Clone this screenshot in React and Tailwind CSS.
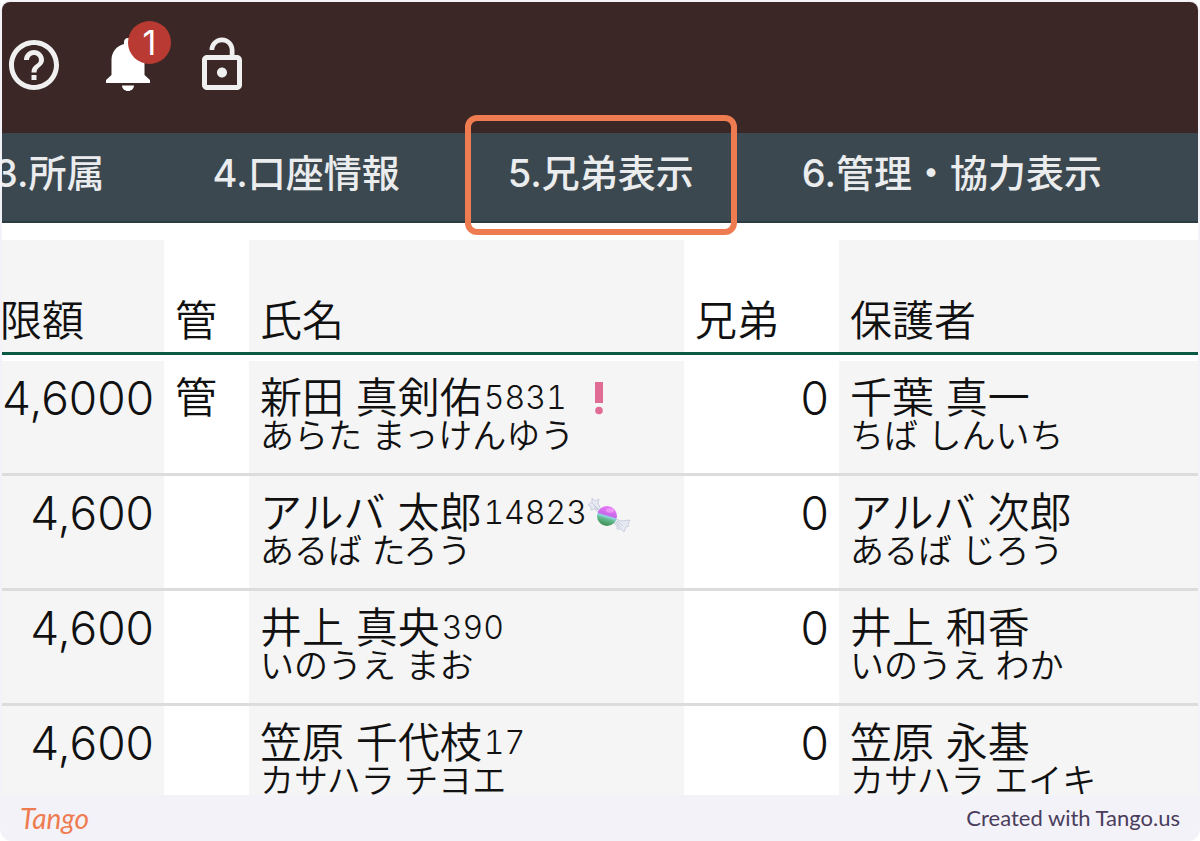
import { MdHelpOutline, MdLockOpen } from 'react-icons/md';

const NAV_ITEMS = ['3.所属', '4.口座情報', '5.兄弟表示', '6.管理・協力表示'];
const ACTIVE_ITEM = '5.兄弟表示';

const ROWS = [
  {
    limit: '4,6000',
    managed: '管',
    name: '新田 真剣佑',
    code: '5831',
    mark: 'alert',
    kana: 'あらた まっけんゆう',
    siblings: 0,
    guardian: '千葉 真一',
    guardianKana: 'ちば しんいち',
  },
  {
    limit: '4,600',
    managed: '',
    name: 'アルバ 太郎',
    code: '14823',
    mark: 'candy',
    kana: 'あるば たろう',
    siblings: 0,
    guardian: 'アルバ 次郎',
    guardianKana: 'あるば じろう',
  },
  {
    limit: '4,600',
    managed: '',
    name: '井上 真央',
    code: '390',
    kana: 'いのうえ まお',
    siblings: 0,
    guardian: '井上 和香',
    guardianKana: 'いのうえ わか',
  },
  {
    limit: '4,600',
    managed: '',
    name: '笠原 千代枝',
    code: '17',
    kana: 'カサハラ チヨエ',
    siblings: 0,
    guardian: '笠原 永基',
    guardianKana: 'カサハラ エイキ',
  },
];

function BellIcon() {
  return (
    <svg viewBox="0 0 60 60" className="size-[60px]" fill="currentColor" aria-hidden="true">
      <path d="M30 3c-2.600 0-4 1.800-4 4v2C18.500 10.800 13.500 17 13.500 25v15L8 45v3h44v-3l-5.500-5V25c0-8-5-14.200-12.500-16V7c0-2.200-1.400-4-4-4Z" />
      <path d="M24 50.500h12c0 3-2.700 5.500-6 5.500s-6-2.500-6-5.500Z" />
    </svg>
  );
}

function AlertMark() {
  return (
    <svg viewBox="0 0 12 34" className="ml-[26px] h-[34px] w-3 shrink-0" fill="#e06c96" role="img" aria-label="注意">
      <rect x="2" y="1" width="8" height="21" />
      <circle cx="6" cy="29.500" r="3.800" />
    </svg>
  );
}

function CandyMark() {
  return (
    <svg viewBox="0 0 44 38" className="h-[38px] w-11 shrink-0" role="img" aria-label="キャンディ">
      <defs>
        <linearGradient id="candy" x1="0.650" y1="0" x2="0.350" y2="1">
          <stop offset="0" stopColor="#ee7cf8" />
          <stop offset="0.450" stopColor="#c866ea" />
          <stop offset="0.520" stopColor="#8fd8e0" />
          <stop offset="0.660" stopColor="#5fb98e" />
          <stop offset="1" stopColor="#3f8a4a" />
        </linearGradient>
      </defs>
      <g fill="#e6e8f2" stroke="#c3c7d8" strokeWidth="0.800" strokeLinejoin="round">
        <path d="M14 16 11 9 12 5 8 7 5 4 5 8 1 11l3 2 0 3 4-1 5 5Z" />
        <path d="m29 25 5 2 9-1-2 4 1 2-3 1-2 5-3-3-4 0 0-3-4-4Z" />
      </g>
      <path d="M5 9l8 8M7 13l6 4M30 27l6 5M29 28l4 6" stroke="#b7bccf" strokeWidth="0.700" />
      <circle cx="20" cy="22" r="10" fill="url(#candy)" />
      <ellipse cx="23" cy="16.500" rx="4" ry="2.200" fill="#fbb9fb" opacity="0.500" />
    </svg>
  );
}

function TopBar() {
  return (
    <header className="flex gap-[34px] bg-[#3b2826] pt-[33px] pb-[38px] pl-0.5 text-[#f0f0f0]">
      <button type="button" aria-label="ヘルプ">
        <MdHelpOutline className="size-[60px]" />
      </button>
      <button type="button" aria-label="通知" className="relative text-white">
        <BellIcon />
        <span className="absolute -top-3.5 left-[30px] flex size-[43px] items-center justify-center rounded-full bg-[#b93a33] text-[34px] leading-none">
          1
        </span>
      </button>
      <button type="button" aria-label="ロック解除">
        <MdLockOpen className="size-[60px]" />
      </button>
    </header>
  );
}

function NavBar() {
  return (
    <nav className="-ml-[62px] flex border-b-2 border-[#2b3c45] bg-[#3b484f] text-[38px] leading-[50px] font-medium whitespace-nowrap text-[#ebecee]">
      {NAV_ITEMS.map((item) => (
        <a key={item} href="#" className="relative px-[54px] pt-[15px] pb-[23px]">
          {item}
          {item === ACTIVE_ITEM && (
            <span className="absolute inset-x-[11px] -top-[18px] -bottom-[14px] rounded-xl border-[6px] border-[#ef7c50]" />
          )}
        </a>
      ))}
    </nav>
  );
}

function Person({ name, kana, code, mark }) {
  return (
    <>
      <div className="flex items-center text-[42px] leading-[42px]">
        <span>{name}</span>
        {code && <span className="ml-0.5 text-[32px] tabular-nums">{code}</span>}
        {mark === 'alert' && <AlertMark />}
        {mark === 'candy' && <CandyMark />}
      </div>
      <div className="text-[34px] leading-[34px]">{kana}</div>
    </>
  );
}

function MemberTable() {
  const shaded = 'bg-[#f5f5f5]';
  const head = 'h-[115px] border-b-[3px] border-[#0a5a44] pb-2.5 pl-[11px] text-left align-bottom text-[42px] leading-[42px] font-[350]';

  return (
    <table className="mt-[17px] w-full table-fixed border-separate border-spacing-0 font-[350] whitespace-nowrap text-[#111]">
      <colgroup>
        <col className="w-[162px]" />
        <col className="w-[85px]" />
        <col className="w-[435px]" />
        <col className="w-[155px]" />
        <col />
      </colgroup>
      <thead>
        <tr>
          <th className={`${head} ${shaded} !pl-0`}>
            <span className="-ml-0.5">限額</span>
          </th>
          <th className={head}>管</th>
          <th className={`${head} ${shaded}`}>氏名</th>
          <th className={head}>兄弟</th>
          <th className={`${head} ${shaded}`}>保護者</th>
        </tr>
      </thead>
      <tbody>
        <tr aria-hidden="true">
          <td colSpan={5} className="h-1.5 p-0" />
        </tr>
        {ROWS.map((row, i) => {
          const last = i === ROWS.length - 1;
          const cell = `pt-4 align-top text-[42px] leading-[42px] ${last ? '' : 'border-b-[3px] border-[#dcdcdc] pb-5'}`;
          return (
            <tr key={row.name}>
              <td className={`${cell} ${shaded} pr-2.5 text-right !text-[46px]`}>{row.limit}</td>
              <td className={`${cell} pl-[11px]`}>{row.managed}</td>
              <td className={`${cell} ${shaded} pl-[11px]`}>
                <Person name={row.name} kana={row.kana} code={row.code} mark={row.mark} />
              </td>
              <td className={`${cell} pr-2.5 text-right !text-[46px]`}>{row.siblings}</td>
              <td className={`${cell} ${shaded} pl-[11px]`}>
                <Person name={row.guardian} kana={row.guardianKana} />
              </td>
            </tr>
          );
        })}
      </tbody>
    </table>
  );
}

export default function App() {
  return (
    <div className="bg-white font-['Inter','Noto_Sans_CJK_JP',sans-serif]">
      <div className="rounded-xl bg-[#f3f2f8] px-0.5 pt-0.5">
        <main className="overflow-hidden rounded-t-lg bg-white">
          <TopBar />
          <NavBar />
          <MemberTable />
        </main>
        <footer className="relative -mt-[3px] flex items-center justify-between rounded-b-xl bg-[#f3f2f8] px-[18px] leading-[46px]">
          <a href="#" className="font-['Lato'] text-[28px] text-[#ef7c50] italic">
            Tango
          </a>
          <a href="#" className="font-['Lato'] text-[22px] text-[#4a3d5c]">
            Created with Tango.us
          </a>
        </footer>
      </div>
    </div>
  );
}
